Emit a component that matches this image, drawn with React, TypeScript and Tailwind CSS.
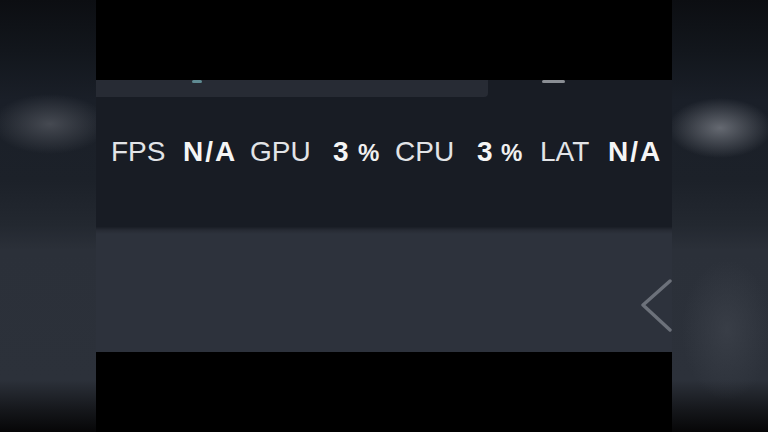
import React from "react";

const label = "text-[28px] leading-none text-[#e2e4e7]";
const value = "text-[28px] leading-none font-bold text-[#f5f5f5]";
const pct = "text-[24px] leading-none font-bold text-[#f0f0f0]";

export default function App() {
  return (
    <div className="flex w-[768px] h-[432px] overflow-hidden bg-black" style={{ fontFamily: '"Liberation Sans", Arial, sans-serif' }}>
      <div className="w-[96px] h-full shrink-0 bg-[radial-gradient(ellipse_58px_30px_at_50px_124px,rgba(72,76,84,0.95),rgba(72,76,84,0)),linear-gradient(to_bottom,#0c0e12_0px,#12161c_50px,#1a1f28_100px,#1c2129_180px,#232830_225px,#2b3039_250px,#2c313a_380px,#15171b_410px,#060607_432px)]" />
      <div className="w-[576px] h-full shrink-0 flex flex-col">
        <div className="h-[80px] bg-black" />
        <div className="relative h-[17px] flex bg-[#181c24]">
          <div className="w-[392px] h-full bg-[#272b34] rounded-br-[4px]" />
          <div className="absolute left-[96px] top-0 w-[10px] h-[3px] rounded-full bg-[#5f8a92]" />
          <div className="absolute left-[446px] top-0 w-[23px] h-[3px] rounded-full bg-[#8a8e94]" />
        </div>
        <div className="h-[130px] bg-[#181c24] pt-[41px] pl-[15px] flex items-baseline">
          <span className={`${label} w-[72px]`}>FPS</span>
          <span className={`${value} w-[67px] tracking-[2px]`}>N/A</span>
          <span className={`${label} w-[83px]`}>GPU</span>
          <span className={`${value} w-[25px]`}>3</span>
          <span className={`${pct} w-[37px]`}>%</span>
          <span className={`${label} w-[82px]`}>CPU</span>
          <span className={`${value} w-[24px]`}>3</span>
          <span className={`${pct} w-[39px]`}>%</span>
          <span className={`${label} w-[68px]`}>LAT</span>
          <span className={`${value} tracking-[2px]`}>N/A</span>
        </div>
        <div className="h-[125px] flex justify-end items-start pt-[51px] bg-[linear-gradient(to_bottom,#1a1e26_0px,#262a33_3px,#2d323c_7px,#2d323c_100%)]">
          <svg width="34" height="56" viewBox="0 0 34 56">
            <polyline points="32,3 5,27 32,52" fill="none" stroke="#6c717a" strokeWidth="3.4" strokeLinecap="round" strokeLinejoin="round" />
          </svg>
        </div>
        <div className="flex-1 bg-black" />
      </div>
      <div className="w-[96px] h-full shrink-0 bg-[radial-gradient(ellipse_52px_30px_at_48px_128px,rgba(105,109,117,0.95),rgba(105,109,117,0)),radial-gradient(ellipse_45px_70px_at_55px_330px,rgba(60,65,74,0.8),rgba(60,65,74,0)),linear-gradient(to_bottom,#0c0e12_0px,#12161c_50px,#1a1f28_100px,#1c2129_180px,#232830_225px,#2b3039_250px,#2c313a_380px,#15171b_410px,#060607_432px)]" />
    </div>
  );
}
